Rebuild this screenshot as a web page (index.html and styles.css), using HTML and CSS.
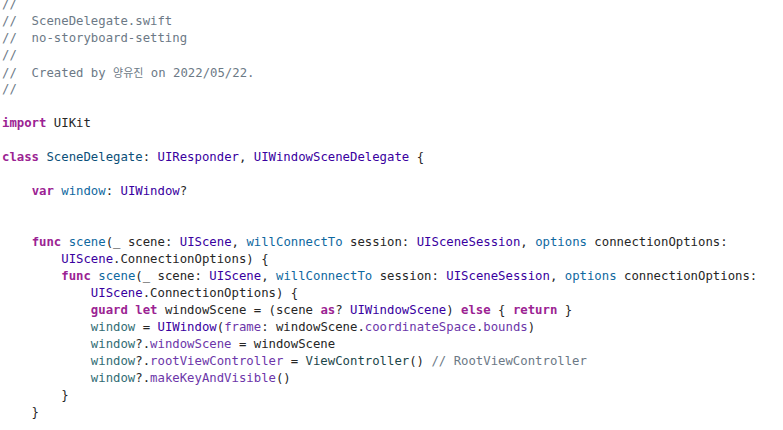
FILE: index.html
```html
<!DOCTYPE html>
<html>
<head>
<meta charset="utf-8">
<link rel="stylesheet" href="styles.css">
</head>
<body>
<div class="editor">
<div class="ln"><span class="c">//</span></div>
<div class="ln"><span class="c">//  SceneDelegate.swift</span></div>
<div class="ln"><span class="c">//  no-storyboard-setting</span></div>
<div class="ln"><span class="c">//</span></div>
<div class="ln"><span class="c">//  Created by <span class="ko">양유진</span> on 2022/05/22.</span></div>
<div class="ln"><span class="c">//</span></div>
<div class="ln"></div>
<div class="ln"><span class="k">import</span> UIKit</div>
<div class="ln"></div>
<div class="ln"><span class="k">class</span> <span class="td">SceneDelegate</span>: <span class="t">UIResponder</span>, <span class="t">UIWindowSceneDelegate</span> {</div>
<div class="ln"></div>
<div class="ln">    <span class="k">var</span> <span class="d">window</span>: <span class="t">UIWindow</span>?</div>
<div class="ln"></div>
<div class="ln"></div>
<div class="ln">    <span class="k">func</span> <span class="d">scene</span>(_ scene: <span class="t">UIScene</span>, <span class="d">willConnectTo</span> session: <span class="t">UISceneSession</span>, <span class="d">options</span> connectionOptions:</div>
<div class="ln">        <span class="t">UIScene</span>.ConnectionOptions) {</div>
<div class="ln">        <span class="k">func</span> <span class="d">scene</span>(_ scene: <span class="t">UIScene</span>, <span class="d">willConnectTo</span> session: <span class="t">UISceneSession</span>, <span class="d">options</span> connectionOptions:</div>
<div class="ln">            <span class="t">UIScene</span>.ConnectionOptions) {</div>
<div class="ln">            <span class="k">guard</span> <span class="k">let</span> windowScene = (scene <span class="k">as</span>? <span class="t">UIWindowScene</span>) <span class="k">else</span> { <span class="k">return</span> }</div>
<div class="ln">            <span class="pv">window</span> = <span class="t">UIWindow</span>(<span class="m">frame</span>: windowScene.<span class="m">coordinateSpace</span>.<span class="m">bounds</span>)</div>
<div class="ln">            <span class="pv">window</span>?.<span class="m">windowScene</span> = windowScene</div>
<div class="ln">            <span class="pv">window</span>?.<span class="m">rootViewController</span> = <span class="pt">ViewController</span>() <span class="c">// RootViewController</span></div>
<div class="ln">            <span class="pv">window</span>?.<span class="m">makeKeyAndVisible</span>()</div>
<div class="ln">        }</div>
<div class="ln">    }</div>
</div>
</body>
</html>
```

FILE: styles.css
```css
html, body {
  margin: 0;
  padding: 0;
  background: #ffffff;
  overflow: hidden;
}

.editor {
  margin-top: -4px;
  padding-left: 2px;
  font-family: "DejaVu Sans Mono", "Liberation Mono", monospace;
  font-size: 12.3px;
  color: #262626;
}

.ln {
  height: 17px;
  line-height: 17px;
  white-space: pre;
}

.c { color: #6c7986; font-weight: normal; }
.k { color: #9b2393; font-weight: bold; }
.t { color: #3900a0; }
.td { color: #0b4f79; }
.d { color: #0f68a0; }
.pv { color: #326d74; }
.pt { color: #1c464a; }
.m { color: #6c36a9; }
.ko {
  font-family: "Noto Sans CJK KR", sans-serif;
  font-size: 11px;
}
```
